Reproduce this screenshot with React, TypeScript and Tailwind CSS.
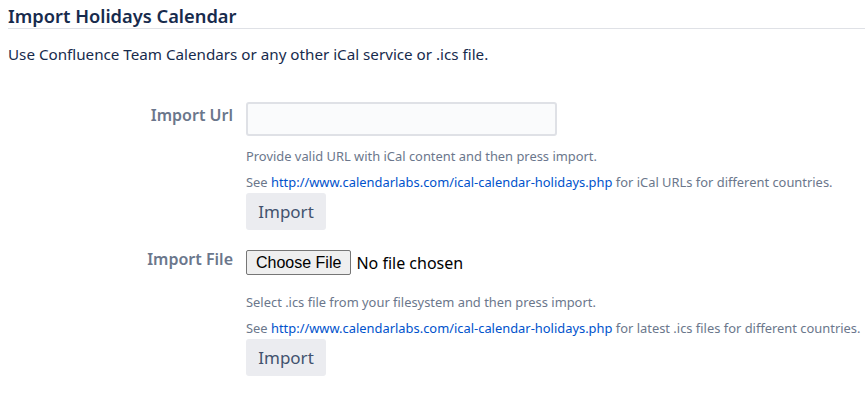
import React from "react";

function Help({ after }: { after: string }) {
  return (
    <div className="whitespace-nowrap text-[12.9px] leading-[20px] text-[#6b778c]">
      See{" "}
      <a className="text-[#0052cc]" href="#">
        http://www.calendarlabs.com/ical-calendar-holidays.php
      </a>{" "}
      {after}
    </div>
  );
}

export default function App() {
  return (
    <div className="w-[865px] h-[396px] overflow-hidden bg-white px-2 font-['Noto_Sans',sans-serif]">
      <h2 className="pt-[4px] text-[18.3px] leading-[24px] font-semibold text-[#172b4d] border-b border-[#dfe1e6] -mr-2">
        Import Holidays Calendar
      </h2>
      <p className="mt-[15px] text-[15.2px] leading-[20px] text-[#172b4d]">
        Use Confluence Team Calendars or any other iCal service or .ics file.
      </p>

      <div className="mt-[38px] flex">
        <div className="w-[238px] shrink-0 pr-[13px] text-right text-[16px] leading-[20px] font-semibold text-[#6b778c] pt-[3px]">
          Import Url
        </div>
        <div className="flex flex-col items-start">
          <input
            type="text"
            className="w-[311px] h-[34px] rounded-[3px] border-2 border-[#dfe1e6] bg-[#fafbfc] px-2 outline-none"
          />
          <div className="mt-[10px] whitespace-nowrap text-[12.9px] leading-[20px] text-[#6b778c]">
            Provide valid URL with iCal content and then press import.
          </div>
          <div className="mt-[6px]">
            <Help after="for iCal URLs for different countries." />
          </div>
          <button className="mt-[1px] h-[37px] w-[80px] rounded-[3px] bg-[#ebecf0] text-[17px] text-[#42526e]">
            Import
          </button>
        </div>
      </div>

      <div className="mt-[20px] flex">
        <div className="w-[238px] shrink-0 pr-[13px] text-right text-[16px] leading-[18px] font-semibold text-[#6b778c]">
          Import File
        </div>
        <div className="flex flex-col items-start">
          <div className="flex items-center h-[25px]">
            <span className="h-[25px] px-[9px] flex items-center rounded-[2px] border border-[#767676] bg-[#efefef] text-[16px] text-black font-['Liberation_Sans',Arial,sans-serif]">
              Choose File
            </span>
            <span className="ml-[5px] text-[16px] text-black">No file chosen</span>
          </div>
          <div className="mt-[17px] whitespace-nowrap text-[12.9px] leading-[20px] text-[#6b778c]">
            Select .ics file from your filesystem and then press import.
          </div>
          <div className="mt-[6px]">
            <Help after="for latest .ics files for different countries." />
          </div>
          <button className="mt-[1px] h-[37px] w-[80px] rounded-[3px] bg-[#ebecf0] text-[17px] text-[#42526e]">
            Import
          </button>
        </div>
      </div>
    </div>
  );
}
